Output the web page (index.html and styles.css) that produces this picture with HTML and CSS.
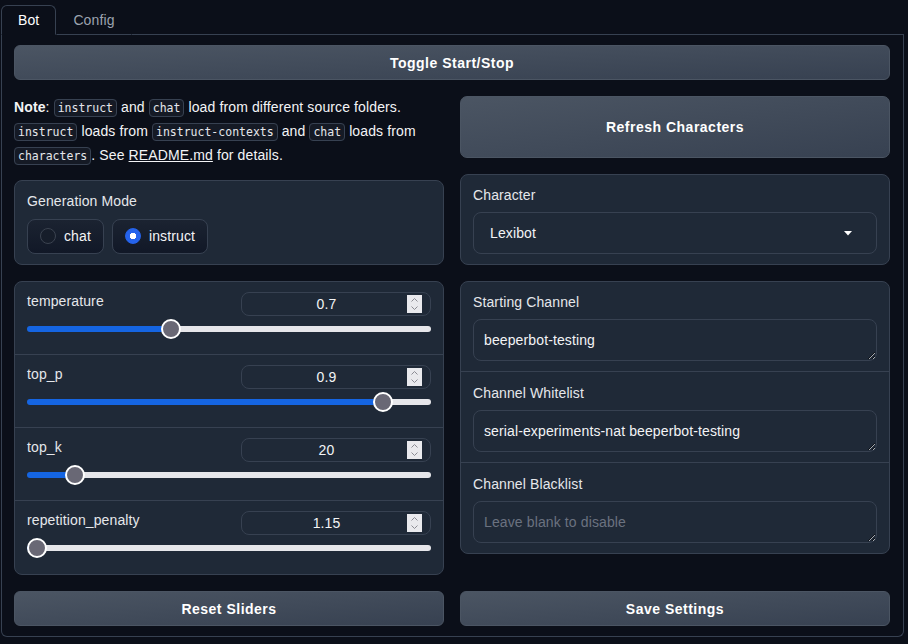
FILE: index.html
```html
<!DOCTYPE html>
<html>
<head>
<meta charset="utf-8">
<link rel="stylesheet" href="styles.css">
</head>
<body>
<div class="tabs">
  <div class="tab-nav">
    <button class="tab selected">Bot</button>
    <button class="tab">Config</button>
    <div class="tab-fill"></div>
  </div>
  <div class="panel">
    <button class="btn">Toggle Start/Stop</button>
    <div class="cols">
      <div class="col">
        <div class="note">
          <strong>Note</strong>: <code>instruct</code> and <code>chat</code> load from different source folders. <code>instruct</code> loads from <code>instruct-contexts</code> and <code>chat</code> loads from <code>characters</code>. See <a href="#">README.md</a> for details.
        </div>
        <div class="block pad">
          <span class="label gm-label">Generation Mode</span>
          <div class="radios">
            <label class="radio-opt"><input type="radio" name="mode" class="radio"><span>chat</span></label>
            <label class="radio-opt"><input type="radio" name="mode" class="radio" checked><span>instruct</span></label>
          </div>
        </div>
        <div class="block sliders">
          <div class="srow">
            <div class="shead">
              <span class="slabel">temperature</span>
              <div class="num"><span class="num-val">0.7</span><svg class="spin" width="15" height="18" viewBox="0 0 15 18"><rect width="15" height="18" fill="#e9e9ed"/><path d="M4.5 6.5 L7.5 3.5 L10.5 6.5" fill="none" stroke="#8b8b93" stroke-width="1"/><path d="M4.5 11.5 L7.5 14.5 L10.5 11.5" fill="none" stroke="#8b8b93" stroke-width="1"/></svg></div>
            </div>
            <input type="range" class="range" min="0" max="2" step="0.01" value="0.7" style="--f:0.35">
          </div>
          <div class="srow">
            <div class="shead">
              <span class="slabel">top_p</span>
              <div class="num"><span class="num-val">0.9</span><svg class="spin" width="15" height="18" viewBox="0 0 15 18"><rect width="15" height="18" fill="#e9e9ed"/><path d="M4.5 6.5 L7.5 3.5 L10.5 6.5" fill="none" stroke="#8b8b93" stroke-width="1"/><path d="M4.5 11.5 L7.5 14.5 L10.5 11.5" fill="none" stroke="#8b8b93" stroke-width="1"/></svg></div>
            </div>
            <input type="range" class="range" min="0" max="1" step="0.01" value="0.9" style="--f:0.9">
          </div>
          <div class="srow">
            <div class="shead">
              <span class="slabel">top_k</span>
              <div class="num"><span class="num-val">20</span><svg class="spin" width="15" height="18" viewBox="0 0 15 18"><rect width="15" height="18" fill="#e9e9ed"/><path d="M4.5 6.5 L7.5 3.5 L10.5 6.5" fill="none" stroke="#8b8b93" stroke-width="1"/><path d="M4.5 11.5 L7.5 14.5 L10.5 11.5" fill="none" stroke="#8b8b93" stroke-width="1"/></svg></div>
            </div>
            <input type="range" class="range" min="0" max="200" step="1" value="20" style="--f:0.1">
          </div>
          <div class="srow last">
            <div class="shead">
              <span class="slabel">repetition_penalty</span>
              <div class="num"><span class="num-val">1.15</span><svg class="spin" width="15" height="18" viewBox="0 0 15 18"><rect width="15" height="18" fill="#e9e9ed"/><path d="M4.5 6.5 L7.5 3.5 L10.5 6.5" fill="none" stroke="#8b8b93" stroke-width="1"/><path d="M4.5 11.5 L7.5 14.5 L10.5 11.5" fill="none" stroke="#8b8b93" stroke-width="1"/></svg></div>
            </div>
            <input type="range" class="range" min="1.15" max="2" step="0.01" value="1.15" style="--f:0">
          </div>
        </div>
      </div>
      <div class="col">
        <button class="btn btn-lg">Refresh Characters</button>
        <div class="block pad">
          <span class="label">Character</span>
          <div class="dropdown">
            <span>Lexibot</span>
            <svg width="8" height="5" viewBox="0 0 8 5"><path d="M0 0 H8 L4 4.5 Z" fill="#ffffff"/></svg>
          </div>
        </div>
        <div class="block channels">
          <div class="crow">
            <span class="label">Starting Channel</span>
            <textarea class="ta" rows="1">beeperbot-testing</textarea>
          </div>
          <div class="crow">
            <span class="label">Channel Whitelist</span>
            <textarea class="ta" rows="1">serial-experiments-nat beeperbot-testing</textarea>
          </div>
          <div class="crow">
            <span class="label">Channel Blacklist</span>
            <textarea class="ta" rows="1" placeholder="Leave blank to disable"></textarea>
          </div>
        </div>
      </div>
    </div>
    <div class="cols">
      <button class="btn">Reset Sliders</button>
      <button class="btn">Save Settings</button>
    </div>
  </div>
</div>
</body>
</html>
```

FILE: styles.css
```css
* {
  box-sizing: border-box;
}

html,
body {
  margin: 0;
  padding: 0;
  background: #0b0f19;
}

body {
  font-family: "Liberation Sans", Arial, sans-serif;
  font-size: 14px;
  letter-spacing: 0.12px;
  color: #f3f4f6;
  padding-top: 5px;
}

.tabs {
  width: 903px;
  margin-left: 1px;
}

.tab-nav {
  display: flex;
  height: 30px;
}

.tab {
  font-family: inherit;
  font-size: 14px;
  letter-spacing: 0.12px;
  background: none;
  border: 1px solid transparent;
  border-bottom-color: #374151;
  padding: 1px 16px 0;
  height: 30px;
  line-height: 27px;
  color: #9ca3af;
  margin: 0;
}

.tab.selected {
  border-color: #374151;
  border-bottom-color: transparent;
  border-radius: 6px 6px 0 0;
  color: #ffffff;
}

.tab-fill {
  flex: 1;
  border-bottom: 1px solid #374151;
}

.panel {
  border: 1px solid #374151;
  border-top: none;
  border-radius: 0 0 6px 6px;
  padding: 10px 13px 10px 12px;
  display: flex;
  flex-direction: column;
  gap: 16px;
}

.btn {
  font-family: inherit;
  font-weight: 700;
  font-size: 14px;
  letter-spacing: 0.5px;
  color: #ffffff;
  border: 1px solid #4b5563;
  background: linear-gradient(to bottom right, #4b5563, #374151);
  border-radius: 6px;
  height: 35px;
  width: 100%;
  margin: 0;
  padding: 0;
}

.btn-lg {
  height: 62px;
  border-radius: 7px;
}

.cols {
  display: grid;
  grid-template-columns: 1fr 1fr;
  gap: 16px;
}

.col {
  display: flex;
  flex-direction: column;
  gap: 16px;
}

.note {
  line-height: 23px;
  height: 68px;
  color: #f3f4f6;
}

.note strong {
  font-weight: 700;
}

.note a {
  color: #f3f4f6;
  text-decoration: underline;
}

code {
  font-family: "DejaVu Sans Mono", monospace;
  font-size: 11.5px;
  letter-spacing: 0;
  background: #151a25;
  border: 1px solid #374151;
  border-radius: 4px;
  padding: 1px 3px;
  color: #e5e7eb;
}

.block {
  background: #1f2937;
  border: 1px solid #374151;
  border-radius: 8px;
}

.pad {
  padding: 10px 12px;
  display: flex;
  flex-direction: column;
  gap: 7px;
}

.label {
  display: block;
  line-height: 20px;
  color: #e5e7eb;
}

.gm-label {
  margin-bottom: 1px;
}

.radios {
  display: flex;
  gap: 8px;
}

.radio-opt {
  display: flex;
  align-items: center;
  gap: 8px;
  height: 35px;
  padding: 0 12px 1px;
  border: 1px solid #374151;
  border-radius: 8px;
  background: linear-gradient(to top, #111827, #1b2331);
  color: #f3f4f6;
}

.radio {
  -webkit-appearance: none;
  appearance: none;
  width: 16px;
  height: 16px;
  margin: 0;
  border-radius: 50%;
  border: 1px solid #3b4350;
  background: #161d2a;
}

.radio:checked {
  border-color: #2563eb;
  background: radial-gradient(circle, #ffffff 0 3px, #2563eb 3.5px);
}

.sliders {
  display: flex;
  flex-direction: column;
}

.srow {
  padding: 10px 12px 15px;
  border-top: 1px solid #374151;
  display: flex;
  flex-direction: column;
  gap: 3px;
}

.srow:first-child {
  border-top: none;
}

.srow.last {
  padding-bottom: 16px;
}

.shead {
  display: flex;
  justify-content: space-between;
  align-items: flex-start;
  height: 24px;
}

.slabel {
  line-height: 18px;
  color: #e5e7eb;
}

.num {
  width: 190px;
  height: 24px;
  border: 1px solid #374151;
  border-radius: 8px;
  display: flex;
  align-items: center;
  padding: 0 8px 0 8px;
  background: #1f2937;
}

.num-val {
  flex: 1;
  text-align: center;
  color: #f3f4f6;
}

.spin {
  display: block;
  margin-left: 4px;
}

.range {
  -webkit-appearance: none;
  appearance: none;
  width: 100%;
  height: 20px;
  margin: 0;
  background: transparent;
  display: block;
}

.range::-webkit-slider-runnable-track {
  height: 6px;
  border-radius: 3px;
  background: linear-gradient(to right, #1565e2 calc(10px + (100% - 20px) * var(--f)), #e6e6ea calc(10px + (100% - 20px) * var(--f)));
}

.range::-webkit-slider-thumb {
  -webkit-appearance: none;
  appearance: none;
  width: 20px;
  height: 20px;
  border-radius: 50%;
  background: #696875;
  border: 2px solid #ffffff;
  margin-top: -7px;
  box-sizing: border-box;
}

.dropdown {
  height: 42px;
  border: 1px solid #374151;
  border-radius: 8px;
  display: flex;
  align-items: center;
  justify-content: space-between;
  padding: 0 24px 0 16px;
  color: #f3f4f6;
}

.dropdown svg {
  display: block;
}

.channels {
  display: flex;
  flex-direction: column;
}

.crow {
  padding: 11px 12px 10px;
  display: flex;
  flex-direction: column;
  gap: 7px;
  border-top: 1px solid #374151;
}

.crow:first-child {
  border-top: none;
  padding-top: 10px;
}

.ta {
  display: block;
  width: 100%;
  height: 42px;
  font-family: inherit;
  font-size: 14px;
  letter-spacing: 0.12px;
  line-height: 20px;
  color: #f3f4f6;
  background: #1f2937;
  border: 1px solid #374151;
  border-radius: 8px;
  padding: 10px 10px;
  resize: vertical;
  overflow: hidden;
  outline: none;
  color-scheme: dark;
  margin: 0;
}

.ta::placeholder {
  color: #6b7280;
}
```
